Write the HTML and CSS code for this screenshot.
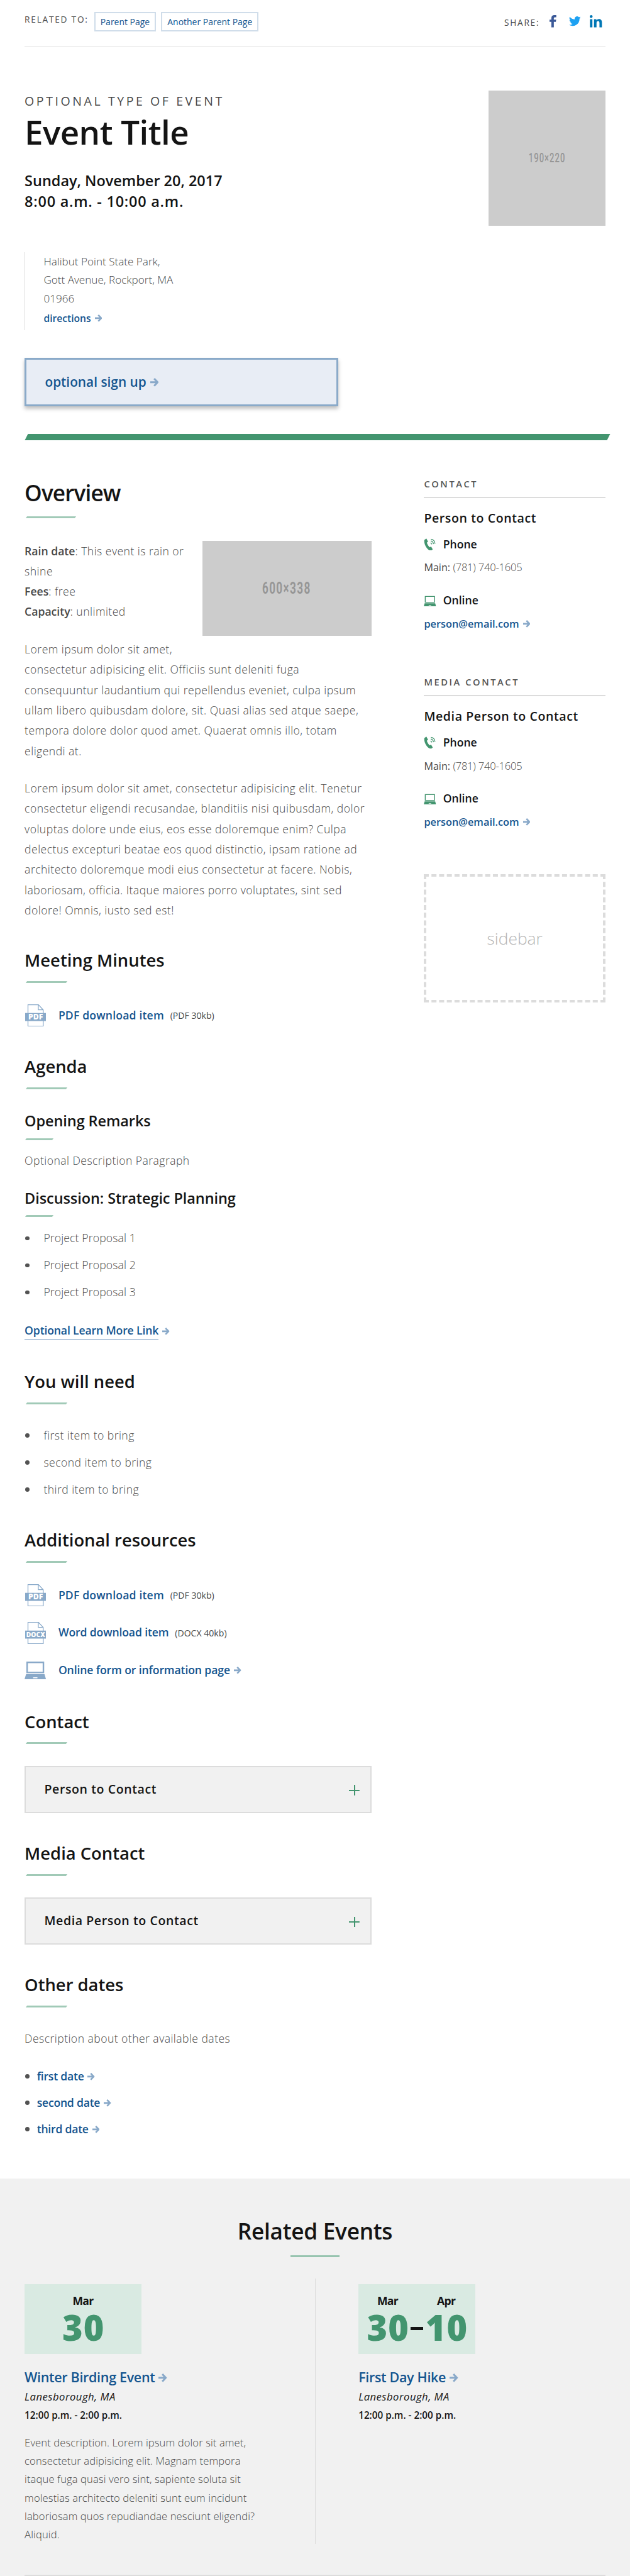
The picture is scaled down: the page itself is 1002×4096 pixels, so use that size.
FILE: index.html
```html
<!DOCTYPE html>
<html lang="en">
<head>
<meta charset="utf-8">
<title>Event Title</title>
<link rel="stylesheet" href="styles.css">
</head>
<body>
<svg class="sprite" aria-hidden="true">
  <symbol id="arrow" viewBox="0 0 10 10"><path d="M0 5h8M4.500 .700 8.500 5l-4 4.300" fill="none" stroke="currentColor" stroke-width="2.200"/></symbol>
  <symbol id="laptop" viewBox="0 0 35 29"><path d="M3 0h29v19H3zM5.500 2.500v14h24v-14zM2.500 20.500h30L35 29H0zM14 25.500v1.500h7v-1.500z" fill="currentColor" fill-rule="evenodd"/></symbol>
  <symbol id="phone" viewBox="0 0 20 20"><path d="M1 2.500 4.200.3 7 5.300 5 7c.8 3 2.300 5.500 4.600 7.600l2.300-1.200 2.700 4.600-2 1.700c-2.200.8-5-.6-7.400-3.600C1.800 11.900.2 6.600 1 2.500z" fill="currentColor"/><path d="M11 7.200a2.600 2.600 0 0 1 1.800 2.500M11.300 4.300c2.500.4 4.200 2.200 4.400 5M11.600 1.400c4 .5 6.500 3.200 6.700 7.400" fill="none" stroke="currentColor" stroke-width="1.300"/></symbol>
  <symbol id="file" viewBox="0 0 34 36"><path d="M4.600.6h17L29.400 9v26.400H4.600zM21.400.6v8.200h8" fill="none" stroke="currentColor" stroke-width="1.300"/><path d="M0 14h34v13H0z" fill="currentColor"/></symbol>
</svg>

<div class="page">
  <header class="topbar">
    <div class="related-to">
      <span class="label">Related to:</span>
      <a class="tag">Parent Page</a>
      <a class="tag">Another Parent Page</a>
    </div>
    <div class="share">
      <span class="label">Share:</span>
      <svg class="fb" viewBox="0 0 11 20"><path d="M3 20v-9H0V7.500h3V5c0-3.200 1.800-5 4.700-5H11v3.500H9C7.600 3.500 7 4 7 5.300v2.200h3.800l-.5 3.500H7v9z" fill="#3b5998"/></svg>
      <svg class="tw" viewBox="0 0 24 20"><path d="M24 2.400a9.700 9.700 0 0 1-2.800.8A4.900 4.900 0 0 0 23.300.4a9.800 9.800 0 0 1-3.100 1.200 4.900 4.900 0 0 0-8.400 4.500A14 14 0 0 1 1.700.9a4.900 4.900 0 0 0 1.500 6.600 4.900 4.900 0 0 1-2.200-.6 4.900 4.900 0 0 0 3.900 4.900 4.900 4.900 0 0 1-2.200.1 4.900 4.900 0 0 0 4.600 3.400A9.900 9.900 0 0 1 0 17.300 14 14 0 0 0 21.500 4.900 10 10 0 0 0 24 2.400z" fill="#1da1f2"/></svg>
      <svg class="li" viewBox="0 0 20 20"><path d="M.3 6.700h4V20h-4zM2.300 0a2.300 2.300 0 1 1 0 4.700 2.300 2.300 0 0 1 0-4.700zM6.900 6.700h3.900v1.900c.7-1.200 2.100-2.200 4-2.200 4 0 5 2.500 5 6.100V20h-4v-6.600c0-1.800-.3-3.600-2.300-3.600s-2.500 1.500-2.500 3.500V20H6.900z" fill="#0077b5"/></svg>
    </div>
  </header>

  <section class="event-head">
    <div>
      <div class="event-type">Optional type of event</div>
      <h1>Event Title</h1>
      <div class="event-date">Sunday, November 20, 2017</div>
      <div class="event-date wide">8:00 a.m. - 10:00 a.m.</div>
    </div>
    <div class="ph ph-tall"><span>190×220</span></div>
  </section>

  <address class="place">
    <div>Halibut Point State Park,</div>
    <div>Gott Avenue, Rockport, MA</div>
    <div>01966</div>
    <a class="link">directions<svg class="arr"><use href="#arrow"/></svg></a>
  </address>

  <a class="signup">optional sign up<svg class="arr"><use href="#arrow"/></svg></a>
  <div class="bar"></div>

  <div class="columns">
    <main>
      <h2 class="big">Overview</h2>
      <div class="rich">
        <div class="ph ph-wide"><span>600×338</span></div>
        <p><b>Rain date</b>: This event is rain or<br>shine<br><b>Fees</b>: free<br><b>Capacity</b>: unlimited</p>
        <p>Lorem ipsum dolor sit amet, consectetur adipisicing elit. Officiis sunt deleniti fuga consequuntur laudantium qui repellendus eveniet, culpa ipsum ullam libero quibusdam dolore, sit. Quasi alias sed atque saepe, tempora dolore dolor quod amet. Quaerat omnis illo, totam eligendi at.</p>
        <p>Lorem ipsum dolor sit amet, consectetur adipisicing elit. Tenetur consectetur eligendi recusandae, blanditiis nisi quibusdam, dolor voluptas dolore unde eius, eos esse doloremque enim? Culpa delectus excepturi beatae eos quod distinctio, ipsam ratione ad architecto doloremque modi eius consectetur at facere. Nobis, laboriosam, officia. Itaque maiores porro voluptates, sint sed dolore! Omnis, iusto sed est!</p>
      </div>

      <h2>Meeting Minutes</h2>
      <div class="files">
        <div class="file"><span class="ficon"><svg><use href="#file"/></svg><i>PDF</i></span><a class="link pdf">PDF download item</a><small>(PDF 30kb)</small></div>
      </div>

      <h2>Agenda</h2>
      <h3 class="first">Opening Remarks</h3>
      <p class="desc">Optional Description Paragraph</p>
      <h3>Discussion: Strategic Planning</h3>
      <ul class="list agenda">
        <li>Project Proposal 1</li>
        <li>Project Proposal 2</li>
        <li>Project Proposal 3</li>
      </ul>
      <a class="link more"><span>Optional Learn More Link</span><svg class="arr"><use href="#arrow"/></svg></a>

      <h2 class="need">You will need</h2>
      <ul class="list bring">
        <li>first item to bring</li>
        <li>second item to bring</li>
        <li>third item to bring</li>
      </ul>

      <h2 class="resources">Additional resources</h2>
      <div class="files">
        <div class="file"><span class="ficon"><svg><use href="#file"/></svg><i>PDF</i></span><a class="link pdf">PDF download item</a><small>(PDF 30kb)</small></div>
        <div class="file"><span class="ficon docx"><svg><use href="#file"/></svg><i>DOCX</i></span><a class="link">Word download item</a><small>(DOCX 40kb)</small></div>
        <div class="file"><span class="ficon"><svg class="lap"><use href="#laptop"/></svg></span><a class="link">Online form or information page<svg class="arr"><use href="#arrow"/></svg></a></div>
      </div>

      <h2>Contact</h2>
      <div class="accordion"><span>Person to Contact</span><i class="plus"></i></div>

      <h2>Media Contact</h2>
      <div class="accordion"><span>Media Person to Contact</span><i class="plus"></i></div>

      <h2>Other dates</h2>
      <p class="other">Description about other available dates</p>
      <ul class="list dates">
        <li><a class="link">first date<svg class="arr"><use href="#arrow"/></svg></a></li>
        <li><a class="link">second date<svg class="arr"><use href="#arrow"/></svg></a></li>
        <li><a class="link">third date<svg class="arr"><use href="#arrow"/></svg></a></li>
      </ul>
    </main>

    <aside>
      <section class="contact">
        <h4>Contact</h4>
        <div class="name">Person to Contact</div>
        <div class="kind"><svg class="k-phone"><use href="#phone"/></svg>Phone</div>
        <div class="value"><span class="main">Main:</span> <span class="num">(781) 740-1605</span></div>
        <div class="kind online"><svg class="k-lap"><use href="#laptop"/></svg>Online</div>
        <div class="value"><a class="link">person@email.com<svg class="arr"><use href="#arrow"/></svg></a></div>
      </section>
      <section class="contact">
        <h4>Media Contact</h4>
        <div class="name">Media Person to Contact</div>
        <div class="kind"><svg class="k-phone"><use href="#phone"/></svg>Phone</div>
        <div class="value"><span class="main">Main:</span> <span class="num">(781) 740-1605</span></div>
        <div class="kind online"><svg class="k-lap"><use href="#laptop"/></svg>Online</div>
        <div class="value"><a class="link">person@email.com<svg class="arr"><use href="#arrow"/></svg></a></div>
      </section>
      <div class="slot">sidebar</div>
    </aside>
  </div>
</div>

<section class="related">
  <h2>Related Events</h2>
  <div class="events">
    <article>
      <div class="date"><div><b>Mar</b><strong>30</strong></div></div>
      <h3>Winter Birding Event<svg class="arr"><use href="#arrow"/></svg></h3>
      <div class="town">Lanesborough, MA</div>
      <div class="time">12:00 p.m. - 2:00 p.m.</div>
      <p>Event description. Lorem ipsum dolor sit amet, consectetur adipisicing elit. Magnam tempora itaque fuga quasi vero sint, sapiente soluta sit molestias architecto deleniti sunt eum incidunt laboriosam quos repudiandae nesciunt eligendi? Aliquid.</p>
    </article>
    <article>
      <div class="date"><div><b>Mar</b><strong>30</strong></div><i class="dash"></i><div><b>Apr</b><strong>10</strong></div></div>
      <h3>First Day Hike<svg class="arr"><use href="#arrow"/></svg></h3>
      <div class="town">Lanesborough, MA</div>
      <div class="time">12:00 p.m. - 2:00 p.m.</div>
    </article>
  </div>
  <div class="end-rule"></div>
</section>
</body>
</html>
```

FILE: styles.css
```css
/* 1rem is ten design pixels */
html { font-size: 9.78px; }
* { box-sizing: border-box; }
body { margin: 0; background: #fff; color: #141414; font-family: "Open Sans", "Noto Sans", sans-serif; font-size: 1.8rem; line-height: 3.3rem; }
h1, h2, h3, h4, p, ul { margin: 0; padding: 0; font-weight: 600; }
ul { list-style: none; }
svg { display: block; flex: none; }
.sprite { position: absolute; width: 0; height: 0; }
.page { padding: 0 4rem; }

.arr { display: inline-block; width: 1.2rem; height: 1.2rem; margin-left: .6rem; color: #89a9c9; }
.link { color: #14558f; font-weight: 600; white-space: nowrap; }
.label { font-size: 1.4rem; line-height: 2rem; font-weight: 500; letter-spacing: .128em; text-transform: uppercase; color: #484848; white-space: nowrap; }

.topbar { display: flex; justify-content: space-between; align-items: flex-start; height: 7.7rem; padding-top: 1.9rem; border-bottom: 1px solid #dcdcdc; }
.related-to { display: flex; gap: .8rem; }
.related-to .label { width: 10.5rem; margin-top: .2rem; }
.tag { height: 3.2rem; padding: 0 .83rem; border: 2px solid #d0ddea; font-size: 1.43rem; line-height: 2.8rem; font-weight: 500; color: #14558f; white-space: nowrap; }
.share { display: flex; align-items: center; margin: .5rem .5rem 0 0; height: 2.2rem; }
.share .label { margin: .3rem 1.600rem 0 0; }
.fb { width: 1.1rem; height: 2rem; margin-right: 2.1rem; }
.tw { width: 1.9rem; height: 1.6rem; margin-right: 1.500rem; }
.li { width: 2rem; height: 2rem; }

.event-head { display: flex; justify-content: space-between; align-items: flex-start; padding-top: 7rem; }
.event-type { margin-top: .3rem; font-size: 2rem; line-height: 2.8rem; font-weight: 500; letter-spacing: .182em; text-transform: uppercase; color: #484848; }
h1 { margin: .7rem 0 3.2rem; font-size: 5.4rem; line-height: 6rem; letter-spacing: -.01em; }
.event-date { font-size: 2.4rem; line-height: 3.4rem; font-weight: 600; }
.event-date.wide { letter-spacing: .032em; }

.ph { display: flex; align-items: center; justify-content: center; flex: none; background: #ccc; color: #969696; font-family: Roboto, sans-serif; font-weight: 700; }
.ph span { transform: scaleX(.65); letter-spacing: .08em; }
.ph-tall { width: 19rem; height: 22rem; font-size: 2.05rem; font-weight: 500; }
.ph-wide { float: right; width: 27.5rem; height: 15.5rem; margin: 0 0 1.600rem 2rem; font-size: 2.7rem; }

.place { width: 30rem; height: 12.7rem; margin-top: 4.3rem; padding-left: 3rem; border-left: 1px solid #dcdcdc; font-style: normal; font-size: 1.75rem; line-height: 3rem; font-weight: 300; color: #484848; white-space: nowrap; }
.place .link { display: block; margin-top: .6rem; font-size: 1.6rem; line-height: 2.4rem; }

.signup { display: block; width: 51rem; height: 7.9rem; margin-top: 4.5rem; padding-left: 3rem; border: 3px solid #8aaac9; background: #e8edf5; box-shadow: 0 4px 6px rgba(0,0,0,.25); font-size: 2.13rem; line-height: 7.3rem; font-weight: 600; color: #14558f; }
.signup .arr { width: 1.4rem; height: 1.4rem; }
.bar { height: 1rem; margin: 4.500rem -.5rem 0 .3rem; background: #43956f; transform: skewX(-27deg); }

.columns { display: flex; justify-content: space-between; }
main { width: 56.4rem; padding-top: 6.3rem; }
aside { width: 29.5rem; padding-top: 6.1rem; }

h2 { margin-top: 4.7rem; font-size: 2.8rem; line-height: 3.6rem; }
h2::after { content: ""; display: block; width: 6.5rem; height: 3px; margin: 1.6rem 0 0 .3rem; background: #a1cab7; transform: skewX(-35deg); }
h2.big { margin-top: 0; font-size: 3.6rem; line-height: 4.4rem; letter-spacing: -.025em; }
h2.big::after { width: 8rem; margin-top: 1.7rem; }
h3 { margin-top: 3rem; font-size: 2.4rem; line-height: 3rem; letter-spacing: -.003em; }
h3::after { content: ""; display: block; width: 4.4rem; height: 3px; margin: 1.24rem 0 0 .2rem; background: #a1cab7; transform: skewX(-35deg); }
h3.first { margin-top: 3.7rem; }

p, .list { font-weight: 300; color: #484848; }
.rich { margin-top: 3.600rem; }
.rich p { margin-bottom: 2.8rem; letter-spacing: .026em; }
.rich p:last-child { margin-bottom: 0; }
.rich b { font-weight: 600; letter-spacing: 0; }
.desc { margin-top: 1.67rem; letter-spacing: .025em; }
.other { margin-top: 3.4rem; letter-spacing: .025em; }

.list li { display: flex; align-items: center; line-height: 4.4rem; letter-spacing: .007em; }
.list li::before { content: ""; width: .7rem; height: .7rem; margin: .1rem 2.300rem 0 .1rem; border-radius: 50%; background: #535353; }
.agenda { margin-top: 1.2rem; }
.bring { margin-top: 2.88rem; }
.bring li { letter-spacing: .025em; }
.dates { margin-top: 2.27rem; }
.list.dates li { line-height: 4.3rem; letter-spacing: -.013em; }
.list.dates li::before { margin-right: 1.2rem; }
.more { display: block; margin-top: 2.7rem; line-height: 2.7rem; letter-spacing: -.008em; }
.more span { display: inline-block; border-bottom: 1px solid #89a9c9; }
h2.need { margin-top: 5rem; }
h2.resources { margin-top: 4.22rem; }

.files { display: flex; flex-direction: column; gap: 2.5rem; margin-top: 3.5rem; }
.file { display: flex; align-items: center; height: 3.6rem; }
.file .link { position: relative; top: -.1rem; letter-spacing: -.007em; }
.file .pdf { letter-spacing: .01em; }
.file small { margin-left: 1rem; font-size: 1.44rem; line-height: 2rem; color: #484848; }
.ficon { position: relative; width: 5.4rem; height: 3.6rem; padding-left: .1rem; margin-right: .1rem; color: #89a9c9; }
.ficon svg { width: 3.4rem; height: 3.6rem; }
.ficon .lap { width: 3.5rem; height: 2.9rem; margin: .4rem 0 0 -.1rem; }
.ficon i { position: absolute; left: .1rem; top: 1.4rem; width: 3.4rem; font-style: normal; font-weight: 800; font-size: 1.25rem; line-height: 1.3rem; text-align: center; color: #fff; }
.ficon.docx i { font-size: 1.05rem; }

.accordion { display: flex; align-items: center; justify-content: space-between; height: 7.7rem; margin-top: 3.5rem; padding: 0 1.700rem 0 3rem; border: 2px solid #dcdcdc; background: #f1f1f1; font-size: 2rem; font-weight: 600; letter-spacing: .03em; }
.plus { width: 1.7rem; height: 1.7rem; margin-top: .3rem; background: linear-gradient(#43956f, #43956f) center / 100% 2px no-repeat, linear-gradient(#43956f, #43956f) center / 2px 100% no-repeat; }

.contact { margin-bottom: 7.25rem; }
h4 { height: 3.300rem; border-bottom: 2px solid #dcdcdc; font-size: 1.5rem; line-height: 2rem; letter-spacing: .175em; text-transform: uppercase; color: #535353; }
.name { margin-top: 1.82rem; font-size: 2rem; line-height: 2.8rem; font-weight: 600; letter-spacing: .03em; }
.kind { display: flex; align-items: center; margin-top: 1.7rem; font-size: 1.8rem; line-height: 2.4rem; font-weight: 600; }
.kind.online { margin-top: 2.9rem; }
.k-phone, .k-lap { width: 2rem; height: 2rem; margin-right: 1.1rem; color: #43956f; }
.k-lap { height: 1.8rem; margin-top: .1rem; }
.value { margin-top: 1.23rem; height: 2.6rem; font-size: 1.7rem; line-height: 2.6rem; color: #484848; }
.value .link { font-size: 1.67rem; }
.main { font-size: 1.65rem; }
.num { font-weight: 300; letter-spacing: -.015em; }
.slot { display: flex; align-items: center; justify-content: center; height: 20.8rem; border: 4px dashed #dcdcdc; font-size: 2.7rem; font-weight: 300; color: #b4b4b4; }

.related { height: 64.7rem; margin-top: 5.95rem; padding: 6.32rem 4rem 0; background: #f1f1f1; }
.related h2 { margin: 0; font-size: 3.6rem; line-height: 4.4rem; letter-spacing: -.008em; text-align: center; }
.related h2::after { width: 8rem; margin: 1.7rem auto 0; transform: none; background: #97c4af; }
.events { display: flex; margin-top: 3.5rem; }
article { width: 47.2rem; height: 43.15rem; padding-top: .9rem; }
article + article { padding-left: 7rem; border-left: 1px solid #dcdcdc; }
.date { display: flex; align-items: flex-start; justify-content: center; gap: .4rem; width: 19rem; height: 11.4rem; padding-top: 1.5rem; background: #d9eae2; text-align: center; }
.date b { display: block; margin-top: .1rem; font-size: 1.8rem; line-height: 2.4rem; font-weight: 700; letter-spacing: -.04em; }
.date strong { display: block; margin: .28rem -.03em 0 0; font-size: 5.7rem; line-height: 5.6rem; font-weight: 800; letter-spacing: .02em; color: #43956f; }
.dash { width: 2rem; height: .6rem; margin-top: 5.45rem; background: #141414; }
.related h3 { margin-top: 2.23rem; font-size: 2.2rem; line-height: 3rem; letter-spacing: -.015em; color: #14558f; }
.related h3::after { content: none; }
.related h3 .arr { width: 1.4rem; height: 1.4rem; }
.town { margin-top: .52rem; font-size: 1.7rem; line-height: 2.4rem; font-weight: 500; font-style: italic; letter-spacing: .03em; }
.time { margin-top: .68rem; font-size: 1.56rem; line-height: 2.4rem; font-weight: 600; }
article p { width: 39rem; margin-top: 1.62rem; font-size: 1.7rem; line-height: 3rem; letter-spacing: .006em; }
.end-rule { height: 2px; margin-top: 5.05rem; background: #dcdcdc; }
```
